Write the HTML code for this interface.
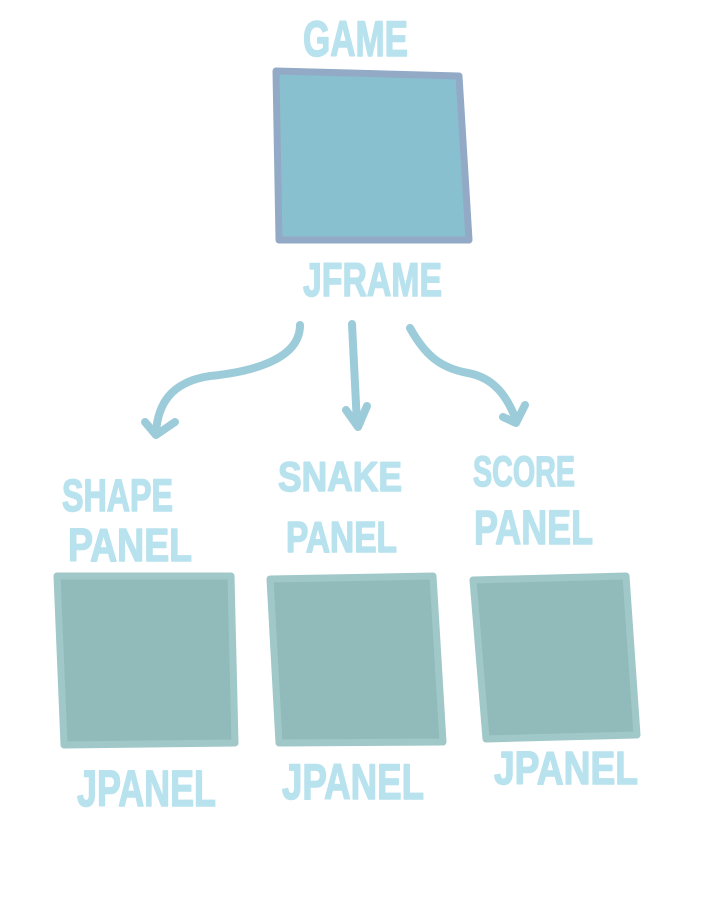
<!DOCTYPE html>
<html><head><meta charset="utf-8"><style>
html,body{margin:0;padding:0;background:#fff;}
svg{display:block;}
text{font-family:"Liberation Sans",sans-serif;font-weight:bold;fill:#b8e2ee;stroke:#b8e2ee;stroke-width:1.5;stroke-linejoin:round;}
</style></head><body>
<svg width="719" height="906" viewBox="0 0 719 906" xmlns="http://www.w3.org/2000/svg">
<rect width="719" height="906" fill="#fff"/>
<polygon points="276,71 459,76 469,240 279,240" fill="#89c0cf" stroke="#92aac6" stroke-width="7" stroke-linejoin="round"/>
<polygon points="57,576 231,576 235,743 64,745" fill="#91bbbb" stroke="#a0c8c8" stroke-width="7" stroke-linejoin="round"/>
<polygon points="270,579 433,576 443,742 279,743" fill="#91bbbb" stroke="#a0c8c8" stroke-width="7" stroke-linejoin="round"/>
<polygon points="473,580 626,576 637,735 486,739" fill="#91bbbb" stroke="#a0c8c8" stroke-width="7" stroke-linejoin="round"/>
<g fill="none" stroke="#9ccbd9" stroke-width="8" stroke-linecap="round" stroke-linejoin="round">
<path d="M300,325 C300,360 250,372 210,376 C170,382 158,405 156,432"/>
<path d="M145,422 L156,435 L175,422"/>
<path d="M352,324 L357,424"/>
<path d="M346,410 L358,427 L367,406"/>
<path d="M410,328 C425,355 440,368 468,373 C495,378 508,398 516,420"/>
<path d="M503,417 L516,423 L525,405"/>
</g>
<text x="303" y="56" font-size="50" textLength="105" lengthAdjust="spacingAndGlyphs">GAME</text>
<text x="303" y="296" font-size="47" textLength="139" lengthAdjust="spacingAndGlyphs">JFRAME</text>
<text x="62" y="511" font-size="45" textLength="111" lengthAdjust="spacingAndGlyphs">SHAPE</text>
<text x="68" y="561" font-size="46" textLength="124" lengthAdjust="spacingAndGlyphs">PANEL</text>
<text x="278" y="491" font-size="42" textLength="124" lengthAdjust="spacingAndGlyphs">SNAKE</text>
<text x="286" y="552" font-size="44" textLength="111" lengthAdjust="spacingAndGlyphs">PANEL</text>
<text x="473" y="486" font-size="43" textLength="102" lengthAdjust="spacingAndGlyphs">SCORE</text>
<text x="474" y="544" font-size="48" textLength="119" lengthAdjust="spacingAndGlyphs">PANEL</text>
<text x="77" y="806" font-size="51" textLength="139" lengthAdjust="spacingAndGlyphs">JPANEL</text>
<text x="282" y="799" font-size="50" textLength="142" lengthAdjust="spacingAndGlyphs">JPANEL</text>
<text x="494" y="784" font-size="46" textLength="144" lengthAdjust="spacingAndGlyphs">JPANEL</text>
</svg>
</body></html>
